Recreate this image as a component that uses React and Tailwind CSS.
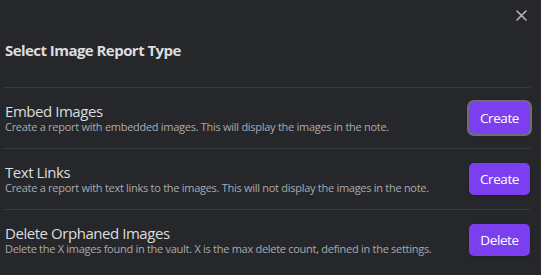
import React from 'react';

const rows = [
  {
    name: 'Embed Images',
    desc: 'Create a report with embedded images. This will display the images in the note.',
    action: 'Create',
    focused: true,
  },
  {
    name: 'Text Links',
    desc: 'Create a report with text links to the images. This will not display the images in the note.',
    action: 'Create',
  },
  {
    name: 'Delete Orphaned Images',
    desc: 'Delete the X images found in the vault. X is the max delete count, defined in the settings.',
    action: 'Delete',
  },
];

export default function App() {
  return (
    <div
      className="relative w-[541px] h-[275px] overflow-hidden bg-[#26272b] pl-[4px] pr-[11px]"
      style={{ fontFamily: '"Open Sans", "Noto Sans", sans-serif' }}
    >
      <button className="absolute top-[10px] right-[14px] w-[11px] h-[11px] text-[#b8b8bc]">
        <svg viewBox="0 0 11 11" width="11" height="11" fill="none" stroke="currentColor" strokeWidth="1.6" strokeLinecap="round">
          <path d="M1 1 L10 10 M10 1 L1 10" />
        </svg>
      </button>

      <h1 className="pt-[38px] mb-[25px] pl-[1px] text-[15px] leading-6 font-bold text-[#dcddde] tracking-[-0.55px]">
        Select Image Report Type
      </h1>

      {rows.map((row) => (
        <div
          key={row.name}
          className="flex items-center justify-between border-t border-[#3a3b3f] py-[14px]"
        >
          <div className="pl-[1px]">
            <div className="text-[15px] leading-[18px] text-[#dcddde] tracking-[-0.45px]">{row.name}</div>
            <div className="text-[11px] leading-[14px] text-[#a9aaad] tracking-[-0.28px]">{row.desc}</div>
          </div>
          <button
            className={`w-[61px] h-[32px] rounded-[5px] bg-[#7b3ff0] text-white text-[13.5px] font-medium tracking-[-0.4px] shadow-sm ${
              row.focused ? 'ring-2 ring-[#6e6e72]' : ''
            }`}
          >
            {row.action}
          </button>
        </div>
      ))}
    </div>
  );
}
